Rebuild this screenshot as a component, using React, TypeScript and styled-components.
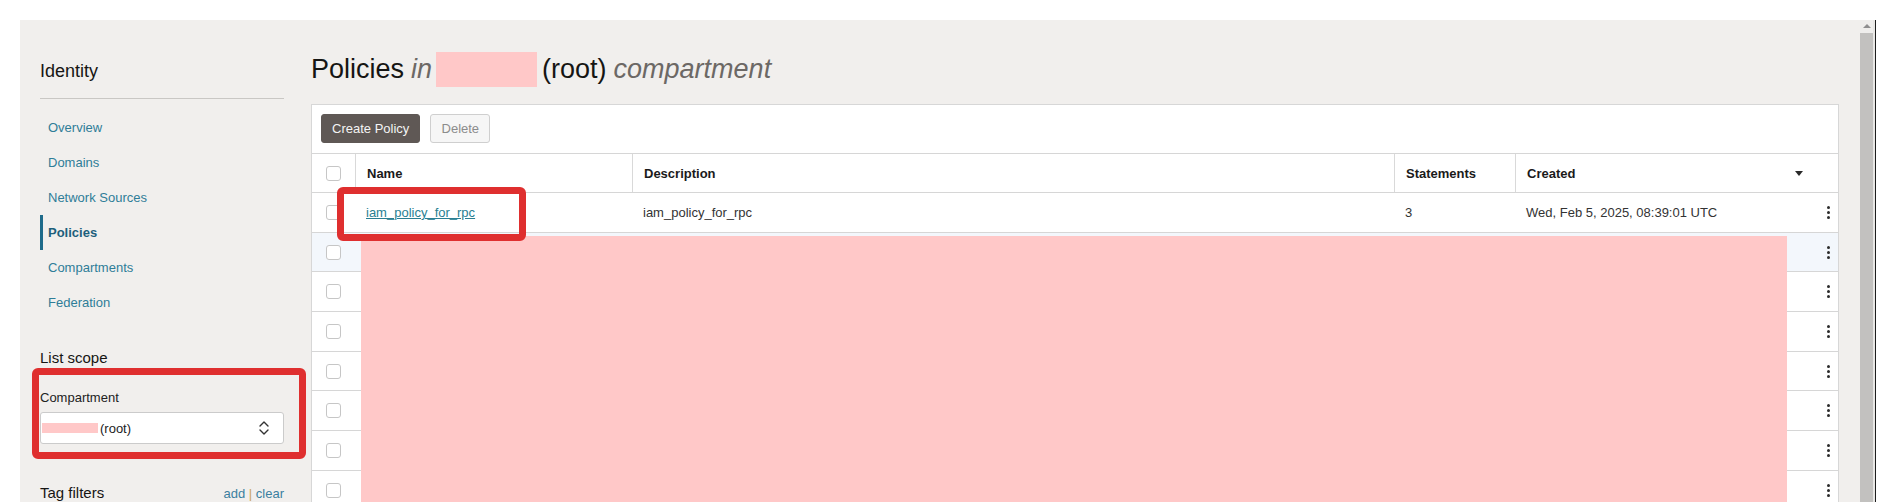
import React from 'react';
import styled, { createGlobalStyle } from 'styled-components';

const GlobalStyle = createGlobalStyle`
  html, body {
    margin: 0;
    padding: 0;
    background: #ffffff;
  }
  body {
    font-family: "Liberation Sans", Arial, sans-serif;
    color: #161513;
  }
  * {
    box-sizing: border-box;
  }
`;

const navItems = ['Overview', 'Domains', 'Network Sources', 'Policies', 'Compartments', 'Federation'];
const GRID = '43px 277px 762px 121px 1fr';
const REDACTED_ROWS = 8;

const Kebab = () => (
  <KebabWrap>
    <Dot />
    <Dot />
    <Dot />
  </KebabWrap>
);

const App = () => {
  return (
    <>
      <GlobalStyle />
      <Root>
        <Frame>
          <Page>
            <Sidebar>
              <SideTitle>Identity</SideTitle>
              <NavList>
                {navItems.map((item) => (
                  <NavItem key={item} $active={item === 'Policies'}>
                    {item}
                  </NavItem>
                ))}
              </NavList>
              <SectionTitle>List scope</SectionTitle>
              <FieldLabel>Compartment</FieldLabel>
              <Select>
                <SelectValue>
                  <InlineRedact />
                  (root)
                </SelectValue>
                <svg width="12" height="16" viewBox="0 0 12 16" fill="none" stroke="#333" strokeWidth="1.4" strokeLinecap="round" strokeLinejoin="round">
                  <path d="M2 6l4-4 4 4" />
                  <path d="M2 10l4 4 4-4" />
                </svg>
              </Select>
              <TagRow>
                <SectionTitle $flat>Tag filters</SectionTitle>
                <TagLinks>
                  add <Pipe>|</Pipe> clear
                </TagLinks>
              </TagRow>
            </Sidebar>

            <Main>
              <Title>
                <span>Policies</span>
                <Muted>in</Muted>
                <TitleRedact />
                <span>(root)</span>
                <Muted>compartment</Muted>
              </Title>

              <Card>
                <Toolbar>
                  <PrimaryButton>Create Policy</PrimaryButton>
                  <GhostButton>Delete</GhostButton>
                </Toolbar>

                <HeaderRow>
                  <CheckCell>
                    <Checkbox />
                  </CheckCell>
                  <HeadCell>Name</HeadCell>
                  <HeadCell>Description</HeadCell>
                  <HeadCell>Statements</HeadCell>
                  <HeadCell $spread>
                    Created
                    <SortCaret />
                  </HeadCell>
                </HeaderRow>

                <Body>
                  <Row>
                    <CheckCell>
                      <Checkbox />
                    </CheckCell>
                    <Cell>
                      <NameLink>iam_policy_for_rpc</NameLink>
                    </Cell>
                    <Cell>iam_policy_for_rpc</Cell>
                    <Cell>3</Cell>
                    <Cell $spread>
                      Wed, Feb 5, 2025, 08:39:01 UTC
                      <Kebab />
                    </Cell>
                  </Row>
                  {Array.from({ length: REDACTED_ROWS }).map((_, i) => (
                    <Row key={i} $hover={i === 0}>
                      <CheckCell>
                        <Checkbox />
                      </CheckCell>
                      <Cell />
                      <Cell />
                      <Cell />
                      <Cell $spread>
                        <span />
                        <Kebab />
                      </Cell>
                    </Row>
                  ))}
                  <RowsRedact />
                </Body>
              </Card>
            </Main>
          </Page>

          <Scrollbar>
            <ScrollArrow />
            <ScrollThumb />
          </Scrollbar>
        </Frame>

        <Highlight style={{ left: 337, top: 187, width: 189, height: 54 }} />
        <Highlight style={{ left: 32, top: 368, width: 274, height: 91 }} />
      </Root>
    </>
  );
};

export default App;

const Root = styled.div`
  position: relative;
  width: 1896px;
  height: 502px;
  overflow: hidden;
  background: #ffffff;
  padding: 20px 0 0 20px;
`;

const Frame = styled.div`
  display: flex;
  width: 1856px;
  height: 600px;
  background: #f1efed;
  border-right: 1px solid #1e1e1e;
`;

const Page = styled.div`
  display: flex;
  gap: 27px;
  width: 1840px;
  padding: 0 21px 0 20px;
`;

const Sidebar = styled.aside`
  width: 244px;
  flex-shrink: 0;
  padding-top: 40px;
`;

const SideTitle = styled.div`
  font-size: 18px;
  line-height: 22px;
  color: #161513;
  padding-bottom: 16px;
  border-bottom: 1px solid #c9c7c4;
`;

const NavList = styled.nav`
  display: flex;
  flex-direction: column;
  margin-top: 11px;
`;

const NavItem = styled.a<{ $active?: boolean }>`
  display: flex;
  align-items: center;
  height: 35px;
  padding-left: 5px;
  border-left: 3px solid ${(p) => (p.$active ? '#1f6b8a' : 'transparent')};
  font-size: 13px;
  font-weight: ${(p) => (p.$active ? 700 : 400)};
  color: ${(p) => (p.$active ? '#1d5f7c' : '#2f7d98')};
  cursor: pointer;
`;

const SectionTitle = styled.div<{ $flat?: boolean }>`
  font-size: 15px;
  line-height: 18px;
  color: #161513;
  margin-top: ${(p) => (p.$flat ? '0' : '29px')};
`;

const FieldLabel = styled.div`
  font-size: 13px;
  line-height: 16px;
  color: #222;
  margin-top: 23px;
`;

const Select = styled.div`
  display: flex;
  align-items: center;
  justify-content: space-between;
  height: 32px;
  margin-top: 6px;
  padding: 0 13px 0 1px;
  background: #ffffff;
  border: 1px solid #cbcbcb;
  border-radius: 3px;
`;

const SelectValue = styled.div`
  display: flex;
  align-items: center;
  gap: 2px;
  font-size: 13px;
  color: #222;
`;

const InlineRedact = styled.span`
  display: inline-block;
  width: 56px;
  height: 10px;
  background: #ffc8c8;
`;

const TagRow = styled.div`
  display: flex;
  align-items: flex-end;
  justify-content: space-between;
  margin-top: 40px;
`;

const TagLinks = styled.div`
  font-size: 13px;
  line-height: 16px;
  color: #3b7fa0;
`;

const Pipe = styled.span`
  color: #c9a45c;
`;

const Main = styled.main`
  flex: 1;
  padding-top: 32px;
`;

const Title = styled.h1`
  display: flex;
  align-items: center;
  gap: 7px;
  height: 35px;
  margin: 0 0 17px;
  font-size: 27px;
  font-weight: 400;
  color: #161513;
`;

const Muted = styled.em`
  color: #6c6865;
`;

const TitleRedact = styled.span`
  width: 101px;
  height: 35px;
  background: #ffc8c8;
  margin: 0 -2px 0 -3px;
`;

const Card = styled.section`
  background: #ffffff;
  border: 1px solid #d7d7d7;
`;

const Toolbar = styled.div`
  display: flex;
  gap: 10px;
  padding: 9px 9px 10px;
`;

const PrimaryButton = styled.button`
  height: 29px;
  padding: 0 10px;
  background: #5f5855;
  color: #f4f4f4;
  border: 1px solid #5f5855;
  border-radius: 3px;
  font-family: inherit;
  font-size: 13px;
  cursor: pointer;
`;

const GhostButton = styled.button`
  height: 29px;
  width: 60px;
  background: #f6f6f6;
  color: #8c8c8c;
  border: 1px solid #cfcfcf;
  border-radius: 3px;
  font-family: inherit;
  font-size: 13px;
`;

const HeaderRow = styled.div`
  display: grid;
  grid-template-columns: ${GRID};
  height: 40px;
  border-top: 1px solid #d6d6d6;
  border-bottom: 1px solid #d6d6d6;
`;

const HeadCell = styled.div<{ $spread?: boolean }>`
  display: flex;
  align-items: center;
  justify-content: ${(p) => (p.$spread ? 'space-between' : 'flex-start')};
  padding: 0 ${(p) => (p.$spread ? '35px' : '11px')} 0 11px;
  border-left: 1px solid #d9d9d9;
  font-size: 13px;
  font-weight: 700;
  color: #1a1a1a;
`;

const SortCaret = styled.span`
  width: 0;
  height: 0;
  border-left: 4.5px solid transparent;
  border-right: 4.5px solid transparent;
  border-top: 5px solid #2a2a2a;
`;

const Body = styled.div`
  position: relative;
`;

const Row = styled.div<{ $hover?: boolean }>`
  display: grid;
  grid-template-columns: ${GRID};
  height: 39.7px;
  border-bottom: 1px solid #d6d6d6;
  background: ${(p) => (p.$hover ? '#f3f7fc' : '#ffffff')};
`;

const CheckCell = styled.div`
  display: flex;
  align-items: center;
  justify-content: center;
`;

const Checkbox = styled.span`
  width: 15px;
  height: 15px;
  border: 1px solid #c6c6c6;
  border-radius: 3px;
  background: #ffffff;
`;

const Cell = styled.div<{ $spread?: boolean }>`
  display: flex;
  align-items: center;
  justify-content: ${(p) => (p.$spread ? 'space-between' : 'flex-start')};
  padding: 0 ${(p) => (p.$spread ? '8px' : '11px')} 0 11px;
  font-size: 13px;
  color: #333;
`;

const NameLink = styled.a`
  color: #2a7f92;
  text-decoration: underline;
  cursor: pointer;
`;

const KebabWrap = styled.span`
  display: flex;
  flex-direction: column;
  gap: 2px;
`;

const Dot = styled.span`
  width: 3px;
  height: 3px;
  border-radius: 50%;
  background: #2b2b2b;
`;

const RowsRedact = styled.div`
  position: absolute;
  left: 49px;
  top: 43px;
  width: 1426px;
  bottom: 0;
  background: #ffc8c8;
`;

const Scrollbar = styled.div`
  display: flex;
  flex-direction: column;
  width: 15px;
  padding-right: 2px;
  background: #e9e8e6;
`;

const ScrollArrow = styled.div`
  display: flex;
  justify-content: center;
  height: 13px;
  padding-top: 4px;
  background: #efeeec;
  &::before {
    content: '';
    width: 0;
    height: 0;
    border-left: 4px solid transparent;
    border-right: 4px solid transparent;
    border-bottom: 4px solid #8f8f8f;
  }
`;

const ScrollThumb = styled.div`
  flex: 1;
  background: #c2c1bf;
`;

const Highlight = styled.div`
  position: absolute;
  border: 7px solid #df2f2f;
  border-radius: 6px;
  pointer-events: none;
`;
